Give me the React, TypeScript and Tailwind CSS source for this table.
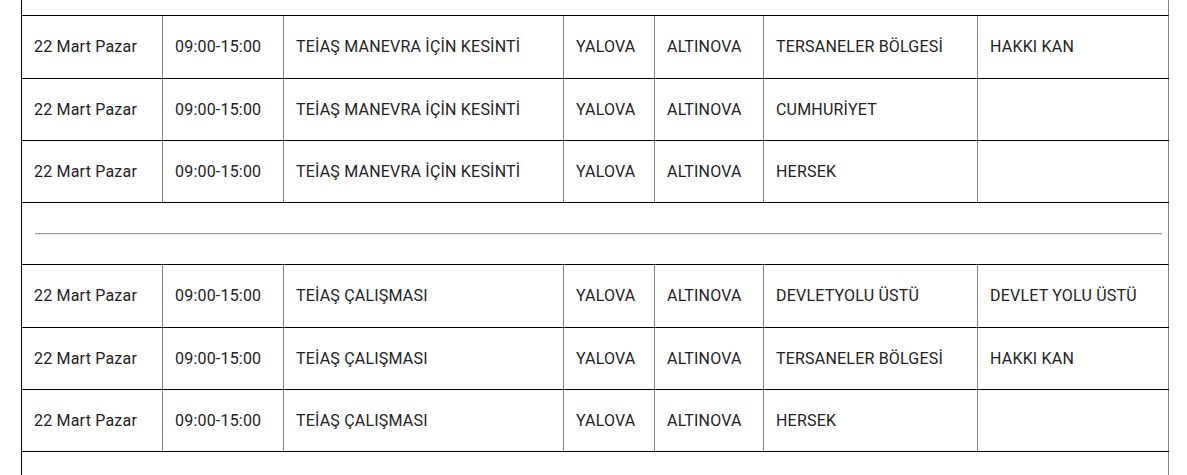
import React from "react";

type Row = string[];

const widths = ["w-[141px]", "w-[121px]", "w-[280px]", "w-[91px]", "w-[109px]", "w-[214px]", "w-[191px]"];

const group1: Row[] = [
  ["22 Mart Pazar", "09:00-15:00", "TEİAŞ MANEVRA İÇİN KESİNTİ", "YALOVA", "ALTINOVA", "TERSANELER BÖLGESİ", "HAKKI KAN"],
  ["22 Mart Pazar", "09:00-15:00", "TEİAŞ MANEVRA İÇİN KESİNTİ", "YALOVA", "ALTINOVA", "CUMHURİYET", ""],
  ["22 Mart Pazar", "09:00-15:00", "TEİAŞ MANEVRA İÇİN KESİNTİ", "YALOVA", "ALTINOVA", "HERSEK", ""],
];
const group2: Row[] = [
  ["22 Mart Pazar", "09:00-15:00", "TEİAŞ ÇALIŞMASI", "YALOVA", "ALTINOVA", "DEVLETYOLU ÜSTÜ", "DEVLET YOLU ÜSTÜ"],
  ["22 Mart Pazar", "09:00-15:00", "TEİAŞ ÇALIŞMASI", "YALOVA", "ALTINOVA", "TERSANELER BÖLGESİ", "HAKKI KAN"],
  ["22 Mart Pazar", "09:00-15:00", "TEİAŞ ÇALIŞMASI", "YALOVA", "ALTINOVA", "HERSEK", ""],
];

function DataRow({ row, h }: { row: Row; h: string }) {
  return (
    <div className={`flex border-b border-black ${h}`}>
      {row.map((c, i) => (
        <div
          key={i}
          className={`${widths[i]} shrink-0 flex items-center px-3 border-r border-[#808080] whitespace-nowrap`}
        >
          {c}
        </div>
      ))}
    </div>
  );
}

export default function App() {
  return (
    <div
      className="w-[1187px] h-[475px] overflow-hidden bg-white text-[16px] tracking-[0.2px] text-[#222222]"
      style={{ fontFamily: "Roboto, 'Noto Sans', sans-serif" }}
    >
      <div className="ml-[21px] w-[1148px] border-l border-black">
        <div className="h-[16px] border-b border-black border-r border-r-[#808080]" />
        <DataRow row={group1[0]} h="h-[63px]" />
        <DataRow row={group1[1]} h="h-[62px]" />
        <DataRow row={group1[2]} h="h-[62px]" />
        <div className="h-[62px] flex items-center border-b border-black border-r border-r-[#808080] pl-[13px] pr-[6px]">
          <div className="w-full h-[2px] border-t border-[#a0a0a0] border-b border-b-[#e8e8e8]" />
        </div>
        <DataRow row={group2[0]} h="h-[63px]" />
        <DataRow row={group2[1]} h="h-[62px]" />
        <DataRow row={group2[2]} h="h-[62px]" />
        <div className="h-[30px] border-r border-[#808080]" />
      </div>
    </div>
  );
}
